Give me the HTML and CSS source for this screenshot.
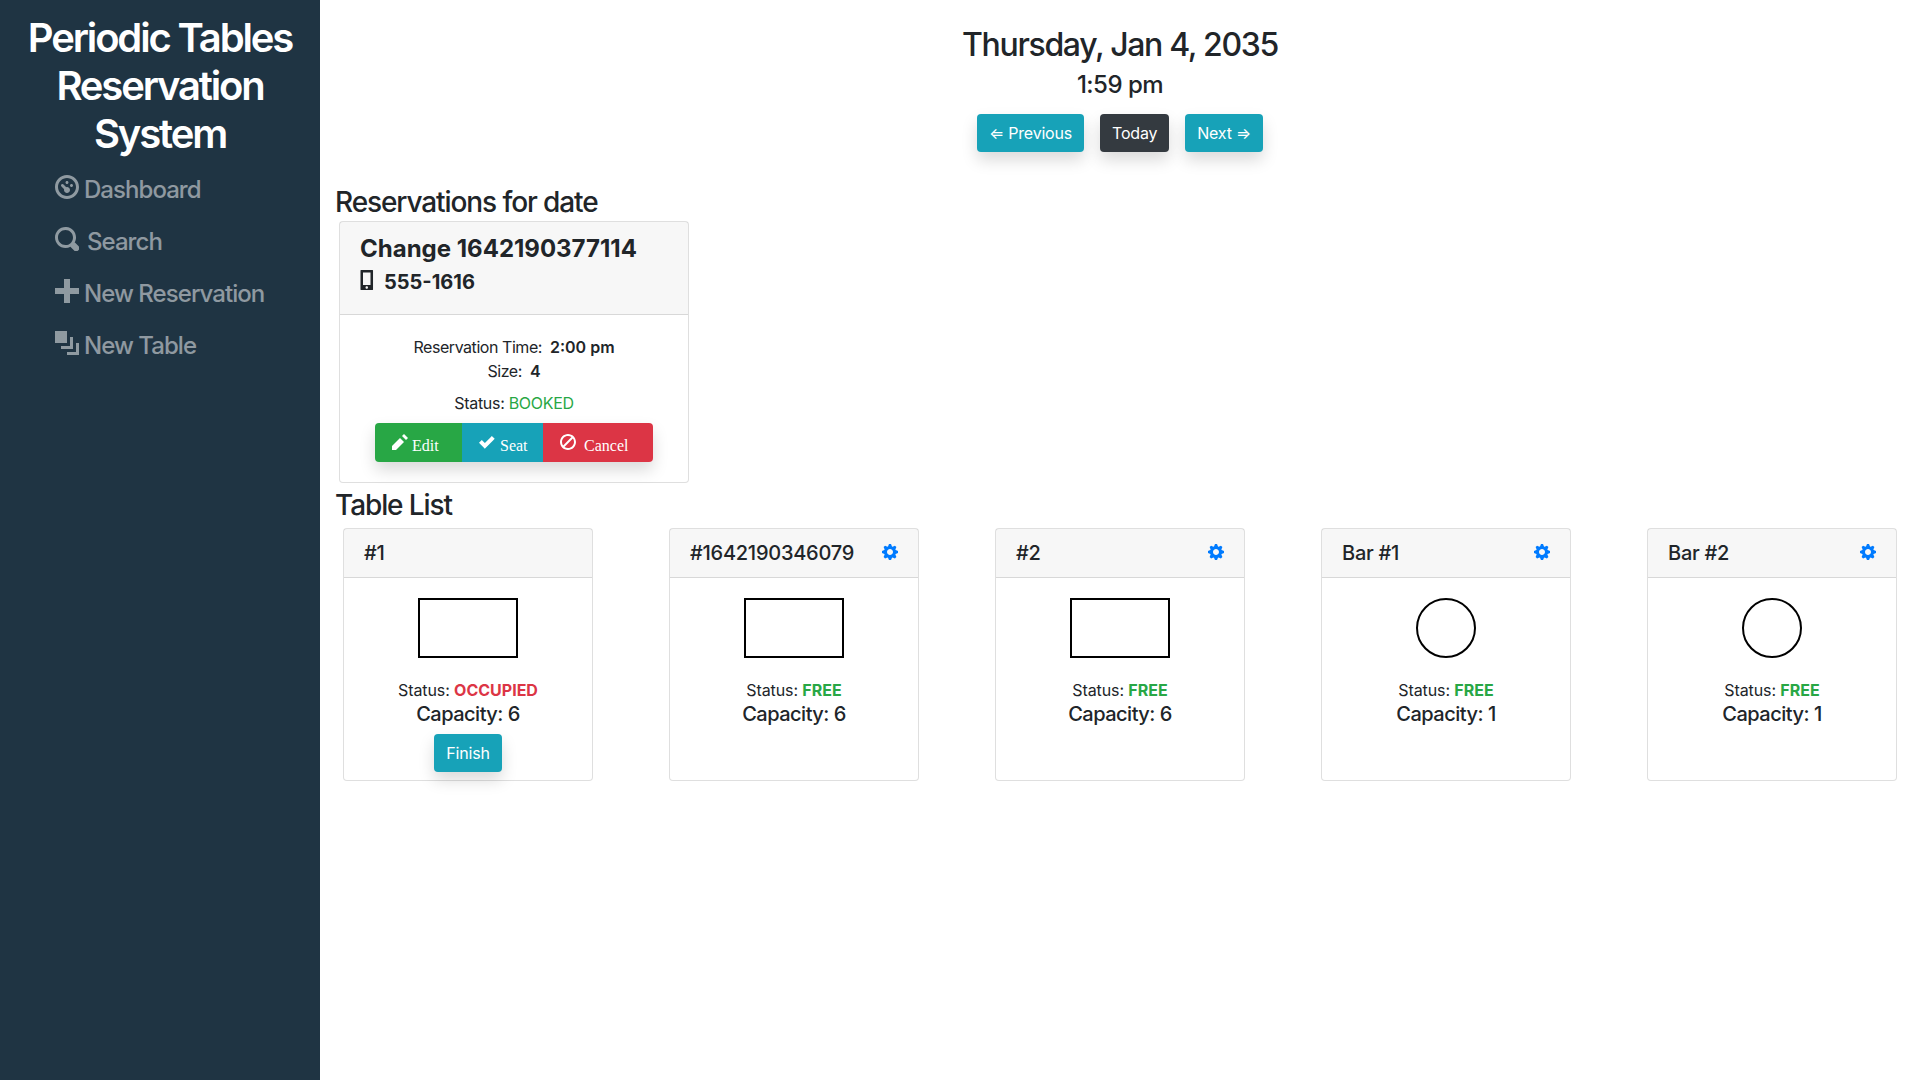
FILE: index.html
```html
<!DOCTYPE html>
<html lang="en">
<head>
<meta charset="utf-8">
<title>Periodic Tables</title>
<link rel="stylesheet" href="styles.css">
</head>
<body>
<svg class="defs" width="0" height="0" aria-hidden="true">
<symbol id="i-dashboard" viewBox="0 0 8 8"><path d="M4 0c-2.2 0-4 1.8-4 4s1.8 4 4 4 4-1.8 4-4-1.8-4-4-4zm0 1c1.66 0 3 1.34 3 3s-1.34 3-3 3-3-1.34-3-3 1.34-3 3-3zm0 1c-.28 0-.5.22-.5.5s.22.5.5.5.5-.22.5-.5-.22-.5-.5-.5zm-1.66 1a.5.5 0 0 0-.19.84l.91.91c-.02.08-.06.16-.06.25 0 .55.45 1 1 1s1-.45 1-1-.45-1-1-1c-.09 0-.17.04-.25.06l-.91-.91a.5.5 0 0 0-.44-.16.5.5 0 0 0-.06 0zm3.16 0c-.28 0-.5.22-.5.5s.22.5.5.5.5-.22.5-.5-.22-.5-.5-.5z"/></symbol>
<symbol id="i-search" viewBox="0 0 8 8"><path d="M3.5 0c-1.93 0-3.5 1.57-3.5 3.5s1.57 3.5 3.5 3.5c.59 0 1.17-.14 1.66-.41a1 1 0 0 0 .13.13l1 1a1.02 1.02 0 1 0 1.44-1.44l-1-1a1 1 0 0 0-.16-.13c.27-.49.44-1.06.44-1.66 0-1.93-1.57-3.5-3.5-3.5zm0 1c1.39 0 2.5 1.11 2.5 2.5 0 .66-.24 1.27-.66 1.72-.01.01-.02.02-.03.03a1 1 0 0 0-.13.13c-.44.4-1.04.63-1.69.63-1.39 0-2.5-1.11-2.5-2.5s1.11-2.5 2.5-2.5z"/></symbol>
<symbol id="i-plus" viewBox="0 0 8 8"><path d="M3 0v3h-3v2h3v3h2v-3h3v-2h-3v-3h-2z"/></symbol>
<symbol id="i-layers" viewBox="0 0 8 8"><path d="M0 0v4h4v-4h-4zm5 2v3h-3v1h4v-4h-1zm2 2v3h-3v1h4v-4h-1z"/></symbol>
<symbol id="i-phone" viewBox="0 0 8 8"><path transform="translate(1)" d="M.19 0c-.11 0-.19.08-.19.19v7.63c0 .11.08.19.19.19h4.63c.11 0 .19-.08.19-.19v-7.63c0-.11-.08-.19-.19-.19h-4.63zm.81 1h3v5h-3v-5zm1.5 5.5c.28 0 .5.22.5.5s-.22.5-.5.5-.5-.22-.5-.5.22-.5.5-.5z"/></symbol>
<symbol id="i-pencil" viewBox="0 0 8 8"><path d="M6 0l-1 1 2 2 1-1-2-2zm-2 2l-4 4v2h2l4-4-2-2z"/></symbol>
<symbol id="i-check" viewBox="0 0 8 8"><path transform="translate(0 1)" d="M6.41 0l-.69.72-2.78 2.78-.81-.78-.72-.72-1.41 1.41.72.72 1.5 1.5.69.72.72-.72 3.5-3.5.72-.72-1.44-1.41z"/></symbol>
<symbol id="i-ban" viewBox="0 0 8 8"><path d="M4 0c-2.2 0-4 1.8-4 4s1.8 4 4 4 4-1.8 4-4-1.8-4-4-4zm0 1c.66 0 1.26.21 1.75.56l-4.19 4.19c-.35-.49-.56-1.09-.56-1.75 0-1.66 1.34-3 3-3zm2.44 1.25c.35.49.56 1.09.56 1.75 0 1.66-1.34 3-3 3-.66 0-1.26-.21-1.75-.56l4.19-4.19z"/></symbol>
<symbol id="i-cog" viewBox="0 0 8 8"><path d="M3.5 0l-.5 1.19c-.1.03-.19.08-.28.13l-1.19-.5-.72.72.5 1.19c-.05.1-.09.18-.13.28l-1.19.5v1l1.19.5c.04.1.08.18.13.28l-.5 1.19.72.72 1.19-.5c.09.04.18.09.28.13l.5 1.19h1l.5-1.19c.09-.04.19-.08.28-.13l1.19.5.72-.72-.5-1.19c.04-.09.09-.19.13-.28l1.19-.5v-1l-1.19-.5c-.03-.09-.08-.19-.13-.28l.5-1.19-.72-.72-1.19.5c-.09-.04-.19-.09-.28-.13l-.5-1.19h-1zm.5 2.5c.83 0 1.5.67 1.5 1.5s-.67 1.5-1.5 1.5-1.5-.67-1.5-1.5.67-1.5 1.5-1.5z"/></symbol>
</svg>
<div class="app">
  <aside class="sidebar">
    <h1 class="brand">Periodic Tables Reservation System</h1>
    <nav class="nav">
      <a class="nav-link" href="#"><svg class="nav-icon"><use href="#i-dashboard"/></svg><span>Dashboard</span></a>
      <a class="nav-link" href="#"><svg class="nav-icon"><use href="#i-search"/></svg><span class="search-label">Search</span></a>
      <a class="nav-link" href="#"><svg class="nav-icon"><use href="#i-plus"/></svg><span>New Reservation</span></a>
      <a class="nav-link" href="#"><svg class="nav-icon"><use href="#i-layers"/></svg><span>New Table</span></a>
    </nav>
  </aside>
  <main class="main">
    <header class="date-head">
      <h2 class="date">Thursday, Jan 4, 2035</h2>
      <h4 class="time">1:59 pm</h4>
      <div class="date-buttons">
        <button class="btn btn-info">⇐ Previous</button>
        <button class="btn btn-dark">Today</button>
        <button class="btn btn-info">Next ⇒</button>
      </div>
    </header>

    <h3 class="section-title">Reservations for date</h3>
    <section class="card res-card">
      <div class="card-header res-header">
        <div class="res-name">Change 1642190377114</div>
        <div class="res-phone"><svg class="phone-icon"><use href="#i-phone"/></svg><span>555-1616</span></div>
      </div>
      <div class="res-body">
        <div>Reservation Time:<b class="val">2:00 pm</b></div>
        <div>Size:<b class="val">4</b></div>
        <div class="res-status">Status: <span class="green">BOOKED</span></div>
        <div class="btn-group">
          <a class="seg seg-edit" href="#"><svg class="seg-icon"><use href="#i-pencil"/></svg><span class="seg-label">Edit</span></a>
          <a class="seg seg-seat" href="#"><svg class="seg-icon"><use href="#i-check"/></svg><span class="seg-label">Seat</span></a>
          <a class="seg seg-cancel" href="#"><svg class="seg-icon"><use href="#i-ban"/></svg><span class="seg-label">Cancel</span></a>
        </div>
      </div>
    </section>

    <h3 class="section-title list-title">Table List</h3>
    <section class="tables">
      <article class="card table-card">
        <div class="card-header table-header"><span>#1</span></div>
        <div class="table-body">
          <div class="shape rect"></div>
          <div class="status">Status: <b class="red">OCCUPIED</b></div>
          <div class="capacity">Capacity: 6</div>
          <button class="btn btn-info btn-finish">Finish</button>
        </div>
      </article>
      <article class="card table-card">
        <div class="card-header table-header"><span>#1642190346079</span><svg class="cog"><use href="#i-cog"/></svg></div>
        <div class="table-body">
          <div class="shape rect"></div>
          <div class="status">Status: <b class="green">FREE</b></div>
          <div class="capacity">Capacity: 6</div>
        </div>
      </article>
      <article class="card table-card">
        <div class="card-header table-header"><span>#2</span><svg class="cog"><use href="#i-cog"/></svg></div>
        <div class="table-body">
          <div class="shape rect"></div>
          <div class="status">Status: <b class="green">FREE</b></div>
          <div class="capacity">Capacity: 6</div>
        </div>
      </article>
      <article class="card table-card">
        <div class="card-header table-header"><span>Bar #1</span><svg class="cog"><use href="#i-cog"/></svg></div>
        <div class="table-body">
          <div class="shape round"></div>
          <div class="status">Status: <b class="green">FREE</b></div>
          <div class="capacity">Capacity: 1</div>
        </div>
      </article>
      <article class="card table-card">
        <div class="card-header table-header"><span>Bar #2</span><svg class="cog"><use href="#i-cog"/></svg></div>
        <div class="table-body">
          <div class="shape round"></div>
          <div class="status">Status: <b class="green">FREE</b></div>
          <div class="capacity">Capacity: 1</div>
        </div>
      </article>
    </section>
  </main>
</div>
</body>
</html>
```
FILE: styles.css
```css
* { box-sizing: border-box; }
html, body { margin: 0; height: 100%; }
body {
  font-family: Inter, "Liberation Sans", sans-serif;
  font-size: 16px;
  line-height: 1.5;
  color: #212529;
  background: #fff;
  overflow: hidden;
}
.defs { position: absolute; }
.app { display: flex; min-height: 100vh; }

.sidebar {
  width: 320px;
  flex: none;
  background: #1f3443;
  padding-top: 14px;
}
.brand {
  margin: 0 16px 6px;
  font-size: 40px;
  font-weight: 600;
  letter-spacing: -2.15px;
  line-height: 48px;
  color: #fff;
  text-align: center;
}
.nav { display: flex; flex-direction: column; padding-left: 55px; }
.nav-link {
  display: flex;
  align-items: center;
  height: 52px;
  font-size: 24px;
  font-weight: 500;
  letter-spacing: -.95px;
  color: rgba(255, 255, 255, .5);
  text-decoration: none;
}
.nav-icon { width: 24px; height: 24px; fill: currentColor; margin: -6px 5px 0 0; flex: none; }
.search-label { margin-left: 3px; }

.main { flex: 1; min-width: 0; padding: 0 0 0 15px; }

.date-head { text-align: center; padding: 26px 15px 0 0; margin-bottom: 34px; }
.date { margin: 0 0 7px; font-size: 32px; font-weight: 500; letter-spacing: -1.33px; line-height: 38.4px; }
.time { margin: 0 0 14px; font-size: 24px; font-weight: 500; letter-spacing: -.5px; line-height: 28.8px; }
.date-buttons { display: flex; justify-content: center; gap: 16px; }

.btn {
  font: inherit;
  letter-spacing: -.2px;
  height: 38px;
  padding: 0 12px;
  border: 0;
  border-radius: 4px;
  color: #fff;
  box-shadow: 0 8px 16px rgba(0, 0, 0, .15);
}
.btn-info { background: #17a2b8; }
.btn-dark { background: #343a40; }

.section-title { margin: 0; font-size: 28px; font-weight: 500; letter-spacing: -1.1px; line-height: 33.6px; }
.list-title { margin-top: 6px; }

.card {
  background: #fff;
  border: 1px solid rgba(0, 0, 0, .125);
  border-radius: 4px;
}
.card-header {
  background: rgba(0, 0, 0, .03);
  border-bottom: 1px solid rgba(0, 0, 0, .125);
}

.res-card { width: 350px; height: 262px; margin: 1px 0 0 4px; }
.res-header { height: 93px; padding: 12px 20px; }
.res-name { font-size: 24px; font-weight: 700; line-height: 29px; }
.res-phone { display: flex; align-items: center; font-size: 20px; font-weight: 700; line-height: 30px; margin-top: 4px; }
.phone-icon { width: 20px; height: 20px; fill: currentColor; margin: -3px 6.5px 0 -2.5px; flex: none; }
.res-body { text-align: center; padding-top: 20px; line-height: 24px; letter-spacing: -.45px; }
.val { margin-left: 8px; font-weight: 600; letter-spacing: 0; }
.res-status { margin-top: 8px; letter-spacing: -.3px; }
.green { color: #28a745; }
.red { color: #dc3545; }
b.green, b.red { font-weight: 700; letter-spacing: 0; }

.btn-group {
  display: flex;
  width: 278px;
  height: 39px;
  margin: 8px 0 0 35px;
  border-radius: 4px;
  box-shadow: 0 8px 16px rgba(0, 0, 0, .15);
  font-family: "Liberation Serif", serif;
  letter-spacing: 0;
}
.seg {
  display: flex;
  align-items: center;
  color: #fff;
  text-decoration: none;
  height: 100%;
}
.seg-label { padding-top: 8px; }
.seg-edit { width: 87px; padding-left: 17px; background: #28a745; border-radius: 4px 0 0 4px; }
.seg-seat { width: 81px; padding-left: 17px; background: #17a2b8; }
.seg-cancel { width: 110px; padding-left: 17px; background: #dc3545; border-radius: 0 4px 4px 0; }
.seg-icon { width: 16px; height: 16px; fill: #fff; margin: -1px 5px 0 0; flex: none; }
.seg-edit .seg-icon { margin-right: 4px; }
.seg-cancel .seg-icon { margin-right: 8px; }

.tables { display: flex; gap: 76px; margin: 6px 0 0 8px; }
.table-card { width: 250px; height: 253px; }
.table-header {
  height: 49px;
  padding: 0 20px;
  display: flex;
  align-items: center;
  justify-content: space-between;
  font-size: 20px;
  font-weight: 500;
  letter-spacing: -.25px;
}
.cog { width: 16px; height: 16px; fill: #007bff; margin-top: -2px; flex: none; }
.table-body { display: flex; flex-direction: column; align-items: center; padding-top: 20px; }
.shape { border: 2px solid #000; height: 60px; }
.rect { width: 100px; }
.round { width: 60px; border-radius: 50%; }
.status { margin-top: 20px; line-height: 24px; letter-spacing: -.1px; }
.capacity { font-size: 20px; font-weight: 500; letter-spacing: -.5px; line-height: 24px; }
.btn-finish { margin-top: 8px; }
```
